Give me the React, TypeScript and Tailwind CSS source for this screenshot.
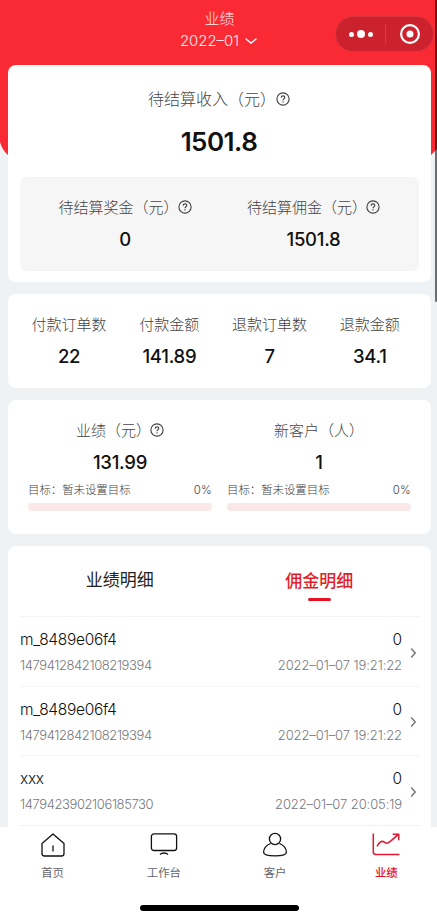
import type { ReactNode } from 'react';

const summary = [
  { label: '付款订单数', value: '22' },
  { label: '付款金额', value: '141.89' },
  { label: '退款订单数', value: '7' },
  { label: '退款金额', value: '34.1' },
];

const records = [
  { id: 1, name: 'm_8489e06f4', order: '1479412842108219394', amount: '0', time: '2022–01–07 19:21:22' },
  { id: 2, name: 'm_8489e06f4', order: '1479412842108219394', amount: '0', time: '2022–01–07 19:21:22' },
  { id: 3, name: 'xxx', order: '1479423902106185730', amount: '0', time: '2022–01–07 20:05:19' },
];

function HelpIcon() {
  return (
    <svg width="14" height="14" viewBox="0 0 14 14" fill="none" stroke="#444" strokeWidth="1.15">
      <circle cx="7" cy="7" r="6.1" />
      <path d="M5.2 5.7c0-1.1.8-1.8 1.8-1.8s1.8.7 1.8 1.6c0 1.2-1.8 1.3-1.8 2.7" />
      <path d="M7 9.2v1.2" />
    </svg>
  );
}

function Label({ children, help }: { children: ReactNode; help?: boolean }) {
  return (
    <div className="flex h-5 items-center justify-center whitespace-nowrap text-[15px] font-light leading-5 text-[#444]">
      <span className="pt-px">{children}</span>
      {help && <span className="-ml-px"><HelpIcon /></span>}
    </div>
  );
}

function Value({ children }: { children: ReactNode }) {
  return <p className="mt-3 text-center text-[18.5px] font-medium leading-5 tracking-[-0.25px] text-[#111]">{children}</p>;
}

function Goal({ label, value, help }: { label: string; value: string; help?: boolean }) {
  return (
    <div className="w-[184px]">
      <Label help={help}>{label}</Label>
      <Value>{value}</Value>
      <div className="mt-[10px] flex h-4 items-center justify-between text-[11.4px] font-light leading-4 text-[#444]">
        <span>目标：暂未设置目标</span>
        <span className="tracking-[0.3px]">0%</span>
      </div>
      <div className="mt-[5px] h-2 rounded-full bg-[#fae8e9]"></div>
    </div>
  );
}

function HomeIcon() {
  return (
    <svg width="28" height="28" viewBox="0 0 28 28" fill="none" stroke="#111" strokeWidth="1.3" strokeLinejoin="round">
      <path d="M3 11.5 14 2l11 9.5v10a2.5 2.5 0 0 1-2.5 2.5h-17A2.5 2.5 0 0 1 3 21.5z" />
      <path d="M14 13.5v6" />
    </svg>
  );
}

function DeskIcon() {
  return (
    <svg width="28" height="28" viewBox="0 0 28 28" fill="none" stroke="#111" strokeWidth="1.3">
      <rect x="1.4" y="1.9" width="25.2" height="16.6" rx="2.5" />
      <path d="M10 22.5c1.2-1.2 2.5-1.5 4-1.5s2.8.3 4 1.5" />
    </svg>
  );
}

function CustomerIcon() {
  return (
    <svg width="28" height="28" viewBox="0 0 28 28" fill="none" stroke="#111" strokeWidth="1.3">
      <circle cx="14" cy="7" r="5.6" />
      <path d="M9.5 11.5C5 13.5 2.6 16.9 2.6 20.3c0 2.8 4.4 3.6 11.4 3.6s11.4-.8 11.4-3.6c0-3.4-2.4-6.8-6.9-8.8" />
    </svg>
  );
}

function ChartIcon() {
  return (
    <svg width="28" height="28" viewBox="0 0 28 28" fill="none" stroke="#e01a32" strokeWidth="1.5">
      <path d="M1.3 1.5v18.5a2.5 2.5 0 0 0 2.5 2.5H27.500" />
      <path d="M5 14.300c2.600-4.800 5.100-6 7.700-4 2.200 1.700 4 1 6-1.200l7.600-6.700" />
      <path d="M20.700 2.200h6v6" />
    </svg>
  );
}

const tabs = [
  { label: '首页', icon: <HomeIcon /> },
  { label: '工作台', icon: <DeskIcon /> },
  { label: '客户', icon: <CustomerIcon /> },
  { label: '业绩', icon: <ChartIcon />, active: true },
];

export default function App() {
  return (
    <div className="relative h-[915px] w-[437px] overflow-hidden bg-[#eef2f4] font-['Inter','Noto_Sans_CJK_SC',sans-serif]">
      {/* red backdrop behind the first card */}
      <svg className="absolute left-0 top-0" width="437" height="160" viewBox="0 0 437 160">
        <path d="M0 0h437v149l-7 7H9Q2 150 0 142z" fill="#fa2a35" />
      </svg>

      <div className="relative flex h-[915px] flex-col">
        <header className="flex h-[65px] shrink-0 flex-col items-center pt-2 text-[#ffe9ea]">
          <h1 className="h-[22px] pl-0.5 text-[15px] font-light leading-[22px]">业绩</h1>
          <div className="flex h-[22px] items-center gap-[6px] text-[14.9px] font-light leading-[22px]">
            <span>2022–01</span>
            <svg width="12" height="8" viewBox="0 0 12 8" fill="none" stroke="#fff" strokeWidth="1.4" strokeLinecap="round">
              <path d="m1 2 5 4 5-4" />
            </svg>
          </div>
        </header>

        <main className="flex h-[762px] shrink-0 flex-col gap-3 overflow-hidden pl-2 pr-[6px]">
          <section className="h-[217px] shrink-0 rounded-lg bg-white px-3 pt-6">
            <div className="flex h-5 items-center justify-center pr-px text-base font-light leading-5 text-[#444]">
              <span>待结算收入（元）</span>
              <HelpIcon />
            </div>
            <p className="mt-[17px] pr-px text-center text-[26px] font-semibold leading-8 tracking-[-0.5px] text-[#111]">1501.8</p>
            <div className="mt-[19px] grid h-[94px] grid-cols-[211px_1fr] rounded-md bg-[#f6f6f6] pt-5">
              <div className="pr-px">
                <Label help>待结算奖金（元）</Label>
                <Value>0</Value>
              </div>
              <div className="pr-[23px]">
                <Label help>待结算佣金（元）</Label>
                <Value>1501.8</Value>
              </div>
            </div>
          </section>

          <section className="grid h-[94px] shrink-0 grid-cols-4 rounded-lg bg-white px-[11px] pt-5">
            {summary.map((item) => (
              <div key={item.label}>
                <Label>{item.label}</Label>
                <Value>{item.value}</Value>
              </div>
            ))}
          </section>

          <section className="flex h-[134px] shrink-0 justify-between rounded-lg bg-white px-5 pt-5">
            <Goal label="业绩（元）" value="131.99" help />
            <Goal label="新客户（人）" value="1" />
          </section>

          <section className="h-[300px] shrink-0 rounded-t-lg bg-white pl-3 pr-[11px]">
            <div className="grid h-[70px] grid-cols-2 pr-px pt-[22px] text-center text-[17px] leading-6">
              <div className="text-[#222]">业绩明细</div>
              <div className="flex flex-col items-center pt-px font-medium text-[#e01f28]">
                佣金明细
                <span className="mt-[5px] h-[3px] w-[23px] rounded-full bg-[#e60f24]"></span>
              </div>
            </div>
            {records.map((item) => (
              <div key={item.id} className="flex h-[69.6px] items-center justify-between border-t border-[#f5f5f5] pr-[3px] pt-[3px]">
                <div>
                  <p className="text-[15.5px] font-light leading-6 tracking-[-0.3px] text-[#111]">{item.name}</p>
                  <p className="mt-px text-[13px] font-light leading-6 tracking-[-0.4px] text-[#77777d]">{item.order}</p>
                </div>
                <div className="flex items-center gap-2">
                  <div className="text-right">
                    <p className="text-[15.5px] font-light leading-6 text-[#111]">{item.amount}</p>
                    <p className="mt-px text-[13px] font-light leading-6 tracking-[-0.1px] text-[#77777d]">{item.time}</p>
                  </div>
                  <svg width="7" height="12" viewBox="0 0 7 12" fill="none" stroke="#77777c" strokeWidth="1.5">
                    <path d="m1.2 1.5 4 4.5-4 4.5" />
                  </svg>
                </div>
              </div>
            ))}
            <div className="border-t border-[#f2f2f2]"></div>
          </section>
        </main>

        <nav className="h-[88px] shrink-0 bg-white">
          <div className="-ml-[3px] grid w-[445px] grid-cols-4 pt-[5px]">
            {tabs.map((tab) => (
              <div key={tab.label} className="flex flex-col items-center">
                {tab.icon}
                <span className={tab.active ? 'mt-[5px] text-[11.4px] font-medium leading-4 text-[#e60f24]' : 'mt-[5px] text-[11.4px] leading-4 text-[#66666c]'}>
                  {tab.label}
                </span>
              </div>
            ))}
          </div>
          <div className="ml-[140px] mt-[24px] h-[6px] w-[159px] rounded-full bg-black"></div>
        </nav>
      </div>

      {/* mini program capsule */}
      <div className="absolute left-[335px] top-[16px] flex h-[36px] w-[99px] items-center rounded-full border border-[#d93540] bg-[#cb222d]">
        <div className="flex w-[49px] items-center justify-center gap-[3px]">
          <span className="h-[5px] w-[5px] rounded-full bg-white"></span>
          <span className="h-[8px] w-[8px] rounded-full bg-white"></span>
          <span className="h-[5px] w-[5px] rounded-full bg-white"></span>
        </div>
        <span className="h-5 w-px bg-[#d93c45]"></span>
        <div className="flex flex-1 justify-center">
          <svg width="20" height="20" viewBox="0 0 20 20">
            <circle cx="10" cy="10" r="8.9" fill="none" stroke="#fff" strokeWidth="2.2" />
            <circle cx="10" cy="10" r="3.5" fill="#fff" />
          </svg>
        </div>
      </div>

      <div className="absolute right-0 top-0 h-[302px] w-[2px] rounded-b-full bg-black/55"></div>
    </div>
  );
}
